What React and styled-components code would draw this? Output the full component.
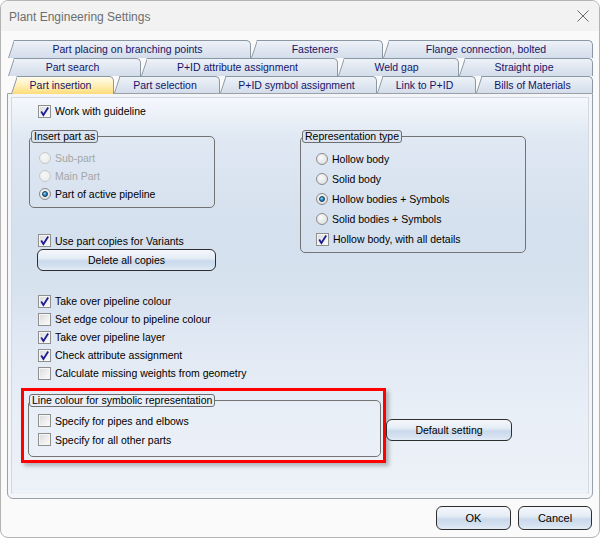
import React from 'react';
import styled, { createGlobalStyle } from 'styled-components';

const GlobalStyle = createGlobalStyle`
  html, body {
    margin: 0;
    padding: 0;
    background: #ffffff;
  }
  body {
    font-family: "Liberation Sans", Arial, sans-serif;
  }
`;

const Window = styled.div`
  box-sizing: border-box;
  width: 600px;
  height: 538px;
  border: 1px solid #b3b3b3;
  border-radius: 8px;
  overflow: hidden;
  background: #fafafa;
  display: flex;
  flex-direction: column;
`;

const TitleBar = styled.div`
  height: 30px;
  flex: 0 0 30px;
  display: flex;
  align-items: center;
  justify-content: space-between;
  padding: 0 10px 0 8px;
  background: #f2f2f2;
`;

const Title = styled.span`
  font-size: 12px;
  color: #6e6e6e;
  padding-top: 1px;
`;

const Body = styled.div`
  padding: 9px 6px 0 6px;
`;

const TabRow = styled.div`
  display: flex;
  align-items: flex-start;
  height: ${p => p.$h}px;
  padding-left: ${p => p.$offset}px;
`;

const inactiveBg = 'linear-gradient(180deg, #eef2f8 0%, #e0e7f1 50%, #d3ddea 100%)';
const activeBg = 'linear-gradient(180deg, #fffbea 0%, #fff1bd 45%, #ffdc78 100%)';

const Tab = styled.div`
  position: relative;
  z-index: ${p => (p.$active ? 3 : 0)};
  flex: 0 0 ${p => p.$w}px;
  height: ${p => p.$h}px;
  box-sizing: border-box;
  font-size: 10.5px;
  line-height: 18px;
  color: #14146a;
  text-align: center;
  white-space: nowrap;
  padding-right: 4px;

  &::before {
    content: '';
    position: absolute;
    z-index: -1;
    left: 0;
    top: 0;
    bottom: 0;
    width: 14px;
    border-left: 1px solid #8c97a4;
    border-top: 1px solid #8c97a4;
    background: ${p => (p.$active ? activeBg : inactiveBg)};
    transform: skewX(-18.4deg);
    transform-origin: 0 100%;
  }

  &::after {
    content: '';
    position: absolute;
    z-index: -1;
    left: 6px;
    top: 0;
    right: 0;
    bottom: 0;
    border-top: 1px solid #8c97a4;
    border-right: 1px solid #8c97a4;
    border-top-right-radius: 5px;
    background: ${p => (p.$active ? activeBg : inactiveBg)};
  }
`;

const Panel = styled.div`
  box-sizing: border-box;
  height: 406px;
  border: 1px solid #9ba1a8;
  border-radius: 0 0 6px 6px;
  padding: 3px;
  background: #f3f5f8;
`;

const PanelInner = styled.div`
  box-sizing: border-box;
  height: 100%;
  border: 1px solid #d3d9e1;
  border-bottom-color: transparent;
  border-radius: 0 0 4px 4px;
  padding: 4px 0 0 17px;
  background: linear-gradient(180deg, #f5f8fc 0px, #dfe8f3 40px, #d5e0ee 130px, #d7e2ef 190px, #e1e9f4 250px, #e9eff7 320px, #edf1f8 100%);
`;

const Row = styled.div`
  display: flex;
  align-items: center;
  gap: 4px;
  height: ${p => p.$h || 18}px;
  margin-left: ${p => p.$ml || 0}px;
  font-size: 10.5px;
  color: ${p => (p.$disabled ? '#a6a6a6' : '#000')};
  white-space: nowrap;
`;

const Box = styled.span`
  box-sizing: border-box;
  flex: 0 0 13px;
  width: 13px;
  height: 13px;
  border: 1px solid #8e8f8f;
  box-shadow: inset 0 0 0 1px #f6f6f6;
  background: linear-gradient(135deg, #d9d9d9 0%, #eeeeee 55%, #fbfbfb 100%);
  display: flex;
  align-items: center;
  justify-content: center;
`;

const Radio = styled.span`
  box-sizing: border-box;
  position: relative;
  flex: 0 0 12px;
  width: 12px;
  height: 12px;
  border-radius: 50%;
  border: 1px solid ${p => (p.$disabled ? '#c6c8ca' : '#8a8b8c')};
  background: ${p => (p.$disabled
    ? 'radial-gradient(circle at 40% 35%, #f7f7f7, #e6e8ea)'
    : 'radial-gradient(circle at 40% 35%, #fbfbfb, #d6d8da)')};

  &::after {
    content: '';
    display: ${p => (p.$checked ? 'block' : 'none')};
    position: absolute;
    left: 2px;
    top: 2px;
    width: 6px;
    height: 6px;
    border-radius: 50%;
    box-sizing: border-box;
    border: 1px solid #0f3a5c;
    background: radial-gradient(circle at 40% 35%, #8fd3f5 0%, #2b86c2 55%, #0d4a78 100%);
  }
`;

const Check = () => (
  <svg width="11" height="11" viewBox="0 0 11 11">
    <path d="M2.2 5.6 L4.4 9 L9.2 1.6" fill="none" stroke="#1c1c96" strokeWidth="1.8" strokeLinejoin="miter" />
  </svg>
);

const CheckItem = ({ label, checked, h, ml }) => (
  <Row $h={h} $ml={ml}>
    <Box>{checked && <Check />}</Box>
    <span>{label}</span>
  </Row>
);

const RadioItem = ({ label, checked, disabled, h }) => (
  <Row $h={h} $disabled={disabled}>
    <Radio $checked={checked} $disabled={disabled} />
    <span>{label}</span>
  </Row>
);

const MidGrid = styled.div`
  display: grid;
  grid-template-columns: 186px 85px 226px;
  align-items: start;
  margin-top: 10px;
`;

const Column = styled.div`
  display: flex;
  flex-direction: column;
`;

const GroupWrap = styled.div`
  position: relative;
  padding-top: 6px;
  grid-column: ${p => p.$col || 'auto'};
`;

const GroupBox = styled.div`
  box-sizing: border-box;
  border: 1px solid #737373;
  border-radius: 5px;
  height: ${p => p.$h}px;
  padding: ${p => p.$pad};
`;

const Legend = styled.span`
  position: absolute;
  top: 0;
  left: ${p => p.$left || 2}px;
  box-sizing: border-box;
  height: 13px;
  padding: 0 2px;
  border: 1px solid #6f6f6f;
  border-radius: 3px;
  background: ${p => p.$bg};
  font-size: 10.5px;
  line-height: 11px;
  color: #000;
  white-space: nowrap;
`;

const Button = styled.button`
  box-sizing: border-box;
  width: ${p => p.$w}px;
  height: ${p => p.$h || 22}px;
  margin: ${p => p.$m || 0};
  padding: 0;
  flex: 0 0 auto;
  border: 1px solid #2e2e2e;
  border-radius: 6px;
  background: linear-gradient(180deg, #f4f7fb 0%, #e6edf6 40%, #cad9ec 56%, #d4e1f0 82%, #e4ecf7 100%);
  font-family: "Liberation Sans", Arial, sans-serif;
  font-size: ${p => p.$fs || 10.5}px;
  color: #000;
`;

const CheckList = styled.div`
  margin-top: 21px;
`;

const AnnotRow = styled.div`
  display: flex;
  align-items: flex-start;
  margin: 6px 0 0 -8px;
`;

const RedFrame = styled.div`
  box-sizing: border-box;
  width: 365px;
  border: 3px solid #ff0000;
  padding: 3px 2px 3px 4px;
  box-shadow: 3px 3px 4px rgba(0, 0, 0, 0.25);
`;

const Footer = styled.div`
  display: flex;
  justify-content: flex-end;
  gap: 7px;
  margin: 7px 1px 0 0;
`;

const tabRows = [
  {
    h: 18,
    offset: 1,
    tabs: [
      ['Part placing on branching points', 243],
      ['Fasteners', 132],
      ['Flange connection, bolted', 210],
    ],
  },
  {
    h: 18,
    offset: 1,
    tabs: [
      ['Part search', 133],
      ['P+ID attribute assignment', 197],
      ['Weld gap', 121],
      ['Straight pipe', 134],
    ],
  },
  {
    h: 17,
    offset: 4,
    tabs: [
      ['Part insertion', 103, true],
      ['Part selection', 106],
      ['P+ID symbol assignment', 157],
      ['Link to P+ID', 99],
      ['Bills of Materials', 117],
    ],
  },
];

const CloseIcon = () => (
  <svg width="12" height="12" viewBox="0 0 12 12">
    <path d="M0.5 0.5 L11.5 11.5 M11.5 0.5 L0.5 11.5" stroke="#6a6a6a" strokeWidth="1" fill="none" />
  </svg>
);

const App = () => (
  <>
    <GlobalStyle />
    <Window>
      <TitleBar>
        <Title>Plant Engineering Settings</Title>
        <CloseIcon />
      </TitleBar>
      <Body>
        {tabRows.map((row, i) => (
          <TabRow key={i} $h={row.h} $offset={row.offset}>
            {row.tabs.map(([label, w, active]) => (
              <Tab key={label} $w={w} $h={active ? row.h + 1 : row.h} $active={active}>
                {label}
              </Tab>
            ))}
          </TabRow>
        ))}
        <Panel>
          <PanelInner>
            <CheckItem label="Work with guideline" checked ml={9} />

            <MidGrid>
              <Column>
                <GroupWrap>
                  <Legend $bg="#dbe4f0">Insert part as</Legend>
                  <GroupBox $h={72} $pad="12px 0 4px 9px">
                    <RadioItem label="Sub-part" disabled />
                    <RadioItem label="Main Part" disabled />
                    <RadioItem label="Part of active pipeline" checked />
                  </GroupBox>
                </GroupWrap>
                <Row $h={17} $ml={9} style={{ marginTop: 24 }}>
                  <Box><Check /></Box>
                  <span>Use part copies for Variants</span>
                </Row>
                <Button $w={179} $m="0 0 0 8px">Delete all copies</Button>
              </Column>

              <GroupWrap $col="3">
                <Legend $bg="#dbe4f0">Representation type</Legend>
                <GroupBox $h={117} $pad="12px 0 3px 15px">
                  <RadioItem label="Hollow body" h={20} />
                  <RadioItem label="Solid body" h={20} />
                  <RadioItem label="Hollow bodies + Symbols" checked h={20} />
                  <RadioItem label="Solid bodies + Symbols" h={20} />
                  <CheckItem label="Hollow body, with all details" checked h={20} />
                </GroupBox>
              </GroupWrap>
            </MidGrid>

            <CheckList>
              <CheckItem label="Take over pipeline colour" checked ml={9} />
              <CheckItem label="Set edge colour to pipeline colour" ml={9} />
              <CheckItem label="Take over pipeline layer" checked ml={9} />
              <CheckItem label="Check attribute assignment" checked ml={9} />
              <CheckItem label="Calculate missing weights from geometry" ml={9} />
            </CheckList>

            <AnnotRow>
              <RedFrame>
                <GroupWrap>
                  <Legend $bg="#e9eef6" $left={1}>Line colour for symbolic representation</Legend>
                  <GroupBox $h={57} $pad="10px 0 7px 9px">
                    <CheckItem label="Specify for pipes and elbows" h={19} />
                    <CheckItem label="Specify for all other parts" h={19} />
                  </GroupBox>
                </GroupWrap>
              </RedFrame>
              <Button $w={126} $m="31px 0 0 0">Default setting</Button>
            </AnnotRow>
          </PanelInner>
        </Panel>
        <Footer>
          <Button $w={75} $h={24} $fs={11}>OK</Button>
          <Button $w={74} $h={24} $fs={11}>Cancel</Button>
        </Footer>
      </Body>
    </Window>
  </>
);

export default App;
